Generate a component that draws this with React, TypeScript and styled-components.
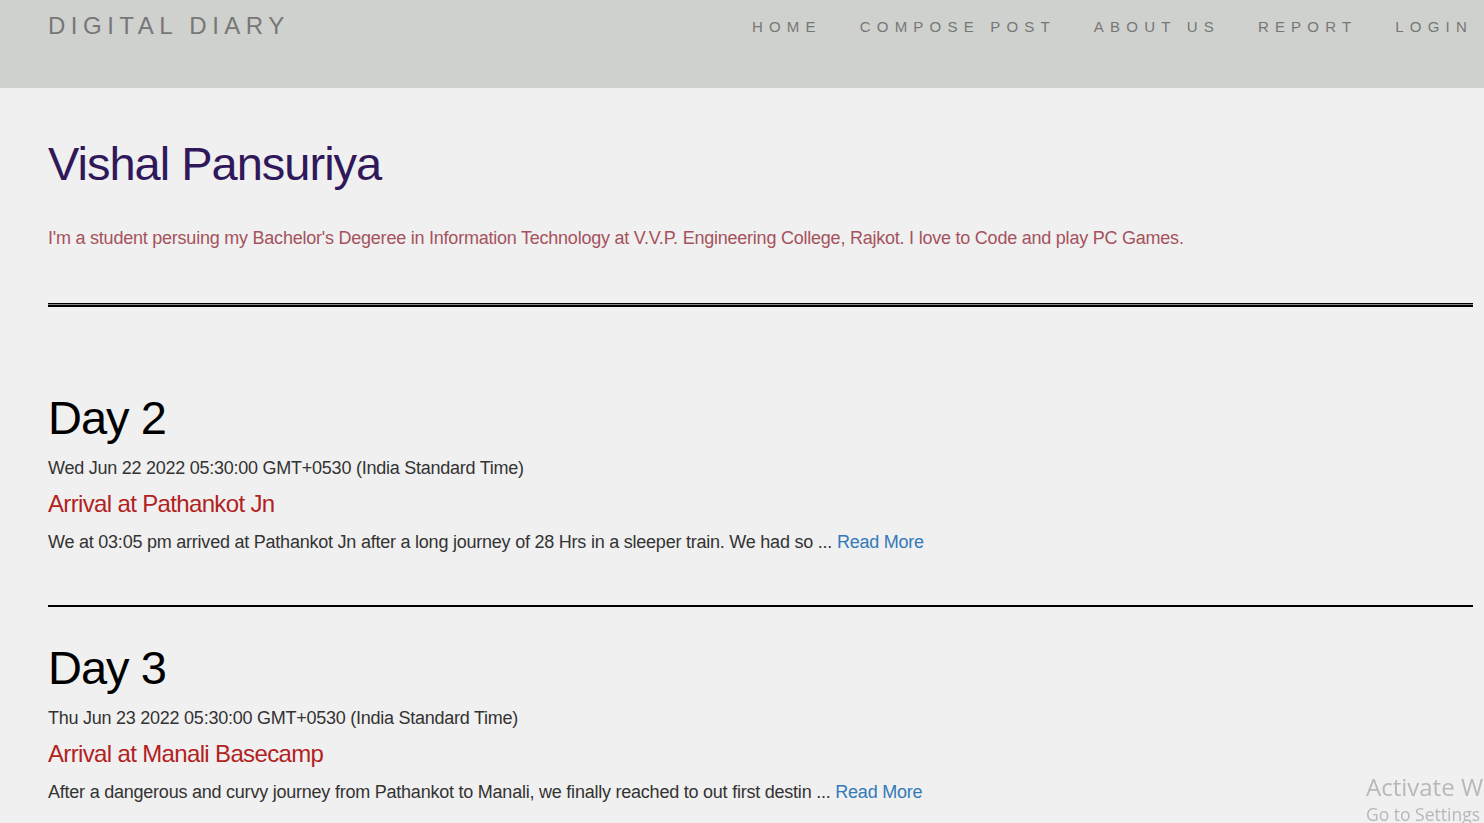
import React from "react";
import styled, { createGlobalStyle } from "styled-components";

const GlobalStyle = createGlobalStyle`
  html, body { margin: 0; padding: 0; }
  body {
    background: #f0f0f0;
    font-family: "Liberation Sans", Arial, sans-serif;
    color: #333;
  }
`;

const Header = styled.header`
  height: 88px;
  background: #cfd1ce;
  display: flex;
  justify-content: space-between;
  align-items: flex-start;
  padding: 0 11px 0 48px;
  box-sizing: border-box;
`;

const Brand = styled.div`
  margin-top: 13px;
  font-size: 24px;
  letter-spacing: 5.5px;
  color: #777;
  line-height: 26px;
`;

const Nav = styled.nav`
  display: flex;
  gap: 38px;
  margin-top: 18px;
`;

const NavLink = styled.a`
  font-size: 15px;
  letter-spacing: 6.2px;
  color: #777;
  text-decoration: none;
  line-height: 17px;
`;

const Main = styled.main`
  padding: 0 11px 60px 48px;
`;

const Name = styled.h1`
  margin: 0;
  padding-top: 50px;
  font-size: 47px;
  font-weight: 400;
  letter-spacing: -1px;
  line-height: 52px;
  color: #30185a;
`;

const Bio = styled.p`
  margin: 36px 0 0;
  font-size: 18px;
  letter-spacing: -0.23px;
  line-height: 24px;
  color: #a5525c;
`;

const Divider = styled.hr<{ $double?: boolean }>`
  margin: 0;
  border: none;
  ${(p) =>
    p.$double
      ? `height: 1px; background: #8a8a8a; border-top: 1px solid #000; border-bottom: 2px solid #000;`
      : `height: 2px; background: #000;`}
`;

const TopDivider = styled.div`
  margin-top: 53px;
`;

const Post = styled.article<{ $first?: boolean }>`
  padding-top: ${(p) => (p.$first ? "85px" : "35px")};
  padding-bottom: 51px;
`;

const DayTitle = styled.h2`
  margin: 0;
  font-size: 47px;
  font-weight: 400;
  letter-spacing: -1px;
  line-height: 52px;
  color: #000;
`;

const DateLine = styled.div`
  margin-top: 14px;
  font-size: 18px;
  letter-spacing: -0.25px;
  line-height: 20px;
  color: #333;
`;

const PostTitle = styled.h3`
  margin: 13px 0 0;
  font-size: 24px;
  font-weight: 400;
  letter-spacing: -0.65px;
  line-height: 26px;
  color: #b22222;
`;

const Excerpt = styled.p`
  margin: 13px 0 0;
  font-size: 18px;
  letter-spacing: -0.23px;
  line-height: 24px;
  color: #333;
`;

const ReadMore = styled.a`
  color: #337ab7;
  text-decoration: none;
`;

const Watermark = styled.div`
  position: fixed;
  left: 1366px;
  top: 771px;
  font-family: "Open Sans", "Noto Sans", sans-serif;
  color: #b8b8b8;
  white-space: nowrap;
`;

const WmTitle = styled.div`
  font-size: 24px;
  line-height: 31px;
`;

const WmSub = styled.div`
  font-size: 17.5px;
  line-height: 24px;
`;

const posts = [
  {
    day: "Day 2",
    date: "Wed Jun 22 2022 05:30:00 GMT+0530 (India Standard Time)",
    title: "Arrival at Pathankot Jn",
    text: "We at 03:05 pm arrived at Pathankot Jn after a long journey of 28 Hrs in a sleeper train. We had so ...",
  },
  {
    day: "Day 3",
    date: "Thu Jun 23 2022 05:30:00 GMT+0530 (India Standard Time)",
    title: "Arrival at Manali Basecamp",
    text: "After a dangerous and curvy journey from Pathankot to Manali, we finally reached to out first destin ...",
  },
];

export default function App() {
  return (
    <>
      <GlobalStyle />
      <Header>
        <Brand>DIGITAL DIARY</Brand>
        <Nav>
          <NavLink href="#">HOME</NavLink>
          <NavLink href="#">COMPOSE POST</NavLink>
          <NavLink href="#">ABOUT US</NavLink>
          <NavLink href="#">REPORT</NavLink>
          <NavLink href="#">LOGIN</NavLink>
        </Nav>
      </Header>
      <Main>
        <Name>Vishal Pansuriya</Name>
        <Bio>
          I'm a student persuing my Bachelor's Degeree in Information Technology at V.V.P. Engineering College, Rajkot. I love to Code and play PC Games.
        </Bio>
        <TopDivider>
          <Divider $double />
        </TopDivider>
        {posts.map((p, i) => (
          <React.Fragment key={p.day}>
            {i > 0 && <Divider />}
            <Post $first={i === 0}>
              <DayTitle>{p.day}</DayTitle>
              <DateLine>{p.date}</DateLine>
              <PostTitle>{p.title}</PostTitle>
              <Excerpt>
                {p.text} <ReadMore href="#">Read More</ReadMore>
              </Excerpt>
            </Post>
          </React.Fragment>
        ))}
      </Main>
      <Watermark>
        <WmTitle>Activate Windows</WmTitle>
        <WmSub>Go to Settings to activate Windows.</WmSub>
      </Watermark>
    </>
  );
}
